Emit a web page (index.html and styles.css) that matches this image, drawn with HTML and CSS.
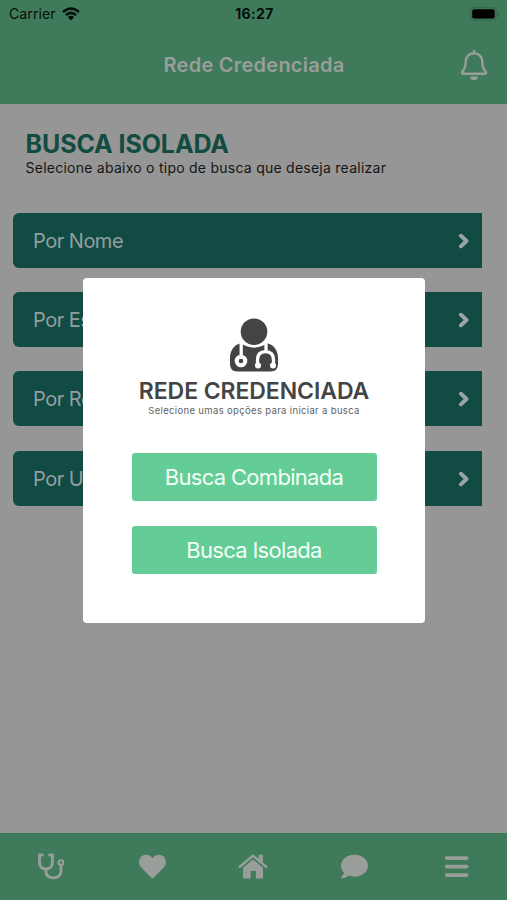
FILE: index.html
```html
<!DOCTYPE html>
<html lang="pt-BR">
<head>
<meta charset="utf-8">
<meta name="viewport" content="width=device-width, initial-scale=1">
<title>Rede Credenciada</title>
<link rel="stylesheet" href="styles.css">
</head>
<body>
<div class="app">
  <header class="header">
    <div class="status">
      <div class="carrier"><span>Carrier</span>
        <svg class="wifi" viewBox="0 0 18 14"><g fill="none" stroke="#050d09" stroke-width="2.5"><path d="M1 5Q9-2 17 5"/><path d="M3.9 8.1Q9 3.7 14.1 8.1"/></g><path d="M5.8 10Q9 7.6 12.2 10L9 13.4Z" fill="#050d09"/></svg>
      </div>
      <span class="time">16:27</span>
      <svg class="battery" viewBox="0 0 30 14"><rect x=".7" y=".7" width="25.6" height="12.3" rx="3.5" fill="none" stroke="#35694d" stroke-width="1.2"/><rect x="2.2" y="2.3" width="22.5" height="9.2" rx="2" fill="#000"/><path d="M27.7 5v4q1.6-.7 1.6-2t-1.6-2z" fill="#2d5a43"/></svg>
    </div>
    <div class="titlebar">
      <h1 class="title">Rede Credenciada</h1>
      <svg class="bell" viewBox="0 0 28 32"><path d="M14 2v2.500M14 4.200c-5 0-8.300 3.700-8.300 8.600 0 5.800-1.300 7.800-3.400 10-.7.8-.3 1.900.8 1.900h21.800c1.100 0 1.500-1.100.8-1.900-2.100-2.200-3.400-4.200-3.400-10 0-4.900-3.300-8.600-8.300-8.600Z" fill="none" stroke="currentColor" stroke-width="2.400" stroke-linecap="round" stroke-linejoin="round"/><path d="M10.200 27.600h7.600a3.800 3.600 0 0 1-7.600 0z" fill="currentColor"/></svg>
    </div>
  </header>
  <main class="content">
    <h2 class="heading">BUSCA ISOLADA</h2>
    <p class="lead">Selecione abaixo o tipo de busca que deseja realizar</p>
    <div class="list">
      <div class="item"><span>Por Nome</span><svg class="chevron" viewBox="0 0 12 16"><path d="M2.900 2.700 8.500 8l-5.600 5.300"/></svg></div>
      <div class="item"><span>Por Especialidade</span><svg class="chevron" viewBox="0 0 12 16"><path d="M2.900 2.700 8.500 8l-5.600 5.300"/></svg></div>
      <div class="item"><span>Por Região</span><svg class="chevron" viewBox="0 0 12 16"><path d="M2.900 2.700 8.500 8l-5.600 5.300"/></svg></div>
      <div class="item"><span>Por Unidade</span><svg class="chevron" viewBox="0 0 12 16"><path d="M2.900 2.700 8.500 8l-5.600 5.300"/></svg></div>
    </div>
  </main>
  <nav class="tabs">
    <svg viewBox="0 0 28 28"><path d="M5.500 2H2.600v7.600c0 4.300 2.500 7 6.500 7s6.900-2.700 6.900-7V2h-2.900M9.300 16.600v2.400c0 4.400 3 6.800 7.500 6.800s8.100-2.500 8.100-6.800v-6.500" fill="none" stroke="currentColor" stroke-width="3" stroke-linejoin="round" stroke-linecap="round"/><circle cx="24.900" cy="10" r="2.500" fill="none" stroke="currentColor" stroke-width="2.200"/></svg>
    <svg viewBox="0 0 512 512"><path fill="currentColor" d="M462.300 62.600C407.500 15.900 326 24.300 275.700 76.200L256 96.500l-19.700-20.300C186.100 24.300 104.500 15.900 49.700 62.600c-62.800 53.600-66.100 149.800-9.900 207.900l193.500 199.800c12.500 12.900 32.800 12.900 45.300 0l193.500-199.800c56.300-58.100 53-154.300-9.800-207.900z"/></svg>
    <svg class="home" viewBox="0 0 30 26"><path d="M1.800 13.200 15 2.200l13.200 11" fill="none" stroke="currentColor" stroke-width="2.500" stroke-linecap="round" stroke-linejoin="round"/><path fill="currentColor" d="M20.700 1.300h4.100V9l-4.100-3.300zM15 6l10 8.200v10q0 .8-.8.800h-6.300v-7.500h-5.200V25H5.800q-.8 0-.8-.8v-10z"/></svg>
    <svg viewBox="0 0 512 512"><path fill="currentColor" d="M256 32C114.600 32 0 125.100 0 240c0 49.600 21.400 95 57 130.700C44.500 421.100 2.700 466 2.200 466.500c-2.200 2.300-2.800 5.700-1.500 8.700S4.800 480 8 480c66.300 0 116-31.800 140.600-51.400 32.700 12.300 69 19.400 107.400 19.400 141.400 0 256-93.100 256-208S397.400 32 256 32z"/></svg>
    <svg viewBox="0 0 28 28"><path d="M3.800 5.300h20.800M3.800 14.100h20.800M3.800 22.900h20.800" fill="none" stroke="currentColor" stroke-width="3.800" stroke-linecap="round"/></svg>
  </nav>
  <section class="modal" role="dialog">
    <svg class="doctor" viewBox="0 0 50 54"><circle cx="25" cy="13.700" r="13.300" fill="#444"/><path d="M12 25.300Q25 34 38 25.300C45 26.500 49 33 49 40v6q0 7.500-7.500 7.500h-33Q1 53.500 1 46v-6c0-7 4-13.500 11-14.700Z" fill="#444"/><g fill="none" stroke="#fff" stroke-width="3.300" stroke-linecap="round"><path d="M12.200 26v13M37 26v7M28.500 47v-4.800q0-8.500 8-8.500t8 8.500v4.800"/><circle cx="12" cy="43" r="4.300" stroke-width="4"/></g><circle cx="29" cy="47.500" r="3" fill="#fff"/><circle cx="44" cy="47.500" r="3" fill="#fff"/></svg>
    <h2 class="modal-title">REDE CREDENCIADA</h2>
    <p class="modal-text">Selecione umas opções para iniciar a busca</p>
    <button class="button combined">Busca Combinada</button>
    <button class="button isolated">Busca Isolada</button>
  </section>
</div>
</body>
</html>
```
FILE: styles.css
```css
* { box-sizing: border-box; }
body { margin: 0; font-family: Inter, "Liberation Sans", sans-serif; }
h1, h2, p { margin: 0; }
svg { display: block; flex: none; }
span, h1, h2, p { white-space: nowrap; }
.app { position: relative; display: flex; flex-direction: column; width: 507px; height: 900px; background: #969696; overflow: hidden; }
.header { height: 103.500px; background: #3f7b5b; }
.status { display: grid; grid-template-columns: 1fr auto 1fr; align-items: center; height: 27px; padding: 0 7px 0 9px; color: #050d09; }
.carrier { display: flex; align-items: center; gap: 6px; font-size: 14px; line-height: 27px; letter-spacing: .1px; }
.wifi { width: 18px; height: 14px; }
.time { font-size: 14px; font-weight: 700; letter-spacing: .35px; }
.battery { width: 30px; height: 14px; justify-self: end; }
.titlebar { display: grid; grid-template-columns: 1fr auto 1fr; align-items: center; height: 76px; padding: 0 19px; color: #999e9a; }
.title { grid-column: 2; padding-left: 1px; font-size: 20px; font-weight: 600; line-height: 26px; letter-spacing: .25px; }
.bell { width: 28px; height: 32px; justify-self: end; }
.content { flex: 1; padding-top: 26.500px; }
.heading { margin-left: 25.500px; font-size: 25px; font-weight: 700; line-height: 28px; letter-spacing: -.1px; color: #124b40; }
.lead { margin-left: 25.500px; font-size: 14px; line-height: 19px; letter-spacing: .25px; color: #151515; }
.list { display: flex; flex-direction: column; gap: 24.400px; margin: 35.600px 25px 0 13px; }
.item { display: flex; align-items: center; justify-content: space-between; height: 55px; padding: 1px 12px 0 20px; border-radius: 6px 0 0 6px; background: #124b44; color: #929f9e; font-size: 20px; letter-spacing: -.5px; }
.chevron { width: 12px; height: 16px; }
.chevron path { fill: none; stroke: #9da5a3; stroke-width: 3.900; stroke-linecap: round; stroke-linejoin: round; }
.tabs { display: grid; grid-template-columns: repeat(5, 1fr); justify-items: center; height: 67px; padding-top: 20px; background: #3f7b5b; color: #999e9a; }
.tabs svg { width: 27px; height: 27px; }
.tabs .home { width: 30px; }
.modal { position: absolute; left: 83px; top: 278px; display: flex; flex-direction: column; align-items: center; width: 342px; height: 345px; padding-top: 40px; border-radius: 4px; background: #fff; color: #444; }
.doctor { width: 50px; height: 54px; }
.modal-title { margin-top: 5px; font-size: 23px; font-weight: 600; line-height: 28px; letter-spacing: -.08px; }
.modal-text { margin-top: -.5px; font-size: 9.500px; line-height: 12px; letter-spacing: .34px; color: #626262; }
.button { width: 245px; height: 48px; padding: 0; border: 0; border-radius: 3px; background: #64cc96; color: #f2fff7; font: 400 22px/48px Inter, "Liberation Sans", sans-serif; letter-spacing: -.7px; }
.combined { margin-top: 36.500px; }
.isolated { margin-top: 25px; }
```
